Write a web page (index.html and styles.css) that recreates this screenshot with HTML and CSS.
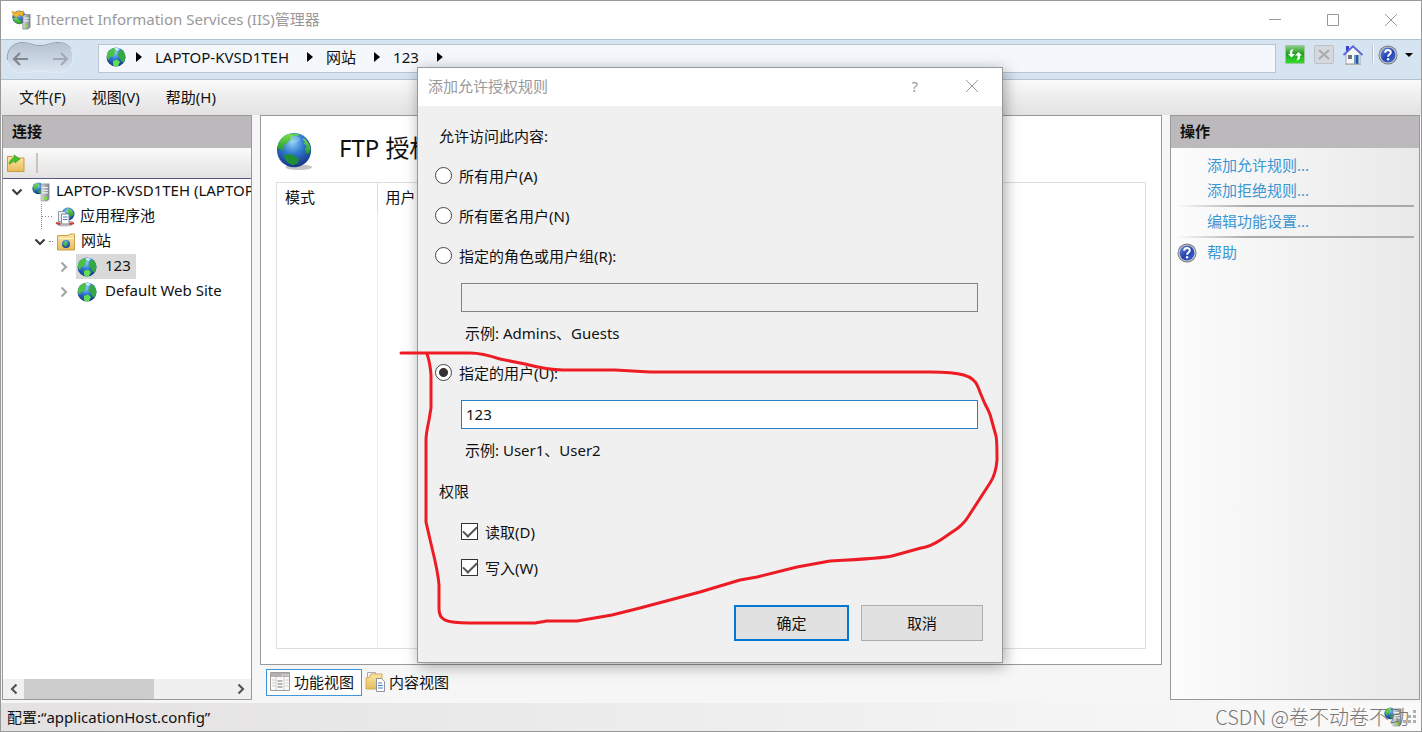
FILE: index.html
```html
<!DOCTYPE html>
<html lang="zh-CN">
<head>
<meta charset="utf-8">
<title>Internet Information Services (IIS)管理器</title>
<link rel="stylesheet" href="styles.css">
</head>
<body>
<svg class="defs" aria-hidden="true">
  <defs>
    <radialGradient id="sea" cx="45%" cy="28%" r="75%">
      <stop offset="0" stop-color="#8fd0f5"/><stop offset=".45" stop-color="#2f78cf"/><stop offset="1" stop-color="#15307f"/>
    </radialGradient>
    <linearGradient id="land" x1="0" y1="0" x2="0" y2="1">
      <stop offset="0" stop-color="#7be04b"/><stop offset="1" stop-color="#1f9433"/>
    </linearGradient>
    <linearGradient id="folder" x1="0" y1="0" x2="0" y2="1">
      <stop offset="0" stop-color="#fbe6a2"/><stop offset="1" stop-color="#e6bd5c"/>
    </linearGradient>
    <linearGradient id="metal" x1="0" y1="0" x2="1" y2="0">
      <stop offset="0" stop-color="#d5dade"/><stop offset="1" stop-color="#7d868d"/>
    </linearGradient>
    <linearGradient id="green" x1="0" y1="0" x2="0" y2="1">
      <stop offset="0" stop-color="#8fce86"/><stop offset=".45" stop-color="#1fa01f"/><stop offset="1" stop-color="#2fe02a"/>
    </linearGradient>
    <linearGradient id="helpfill" x1="0" y1="0" x2="1" y2="1">
      <stop offset="0" stop-color="#6d92e0"/><stop offset=".5" stop-color="#2443ae"/><stop offset="1" stop-color="#3e68d2"/>
    </linearGradient>
    <linearGradient id="blob" x1="0" y1="0" x2="0" y2="1">
      <stop offset="0" stop-color="#b5c1d0"/><stop offset="1" stop-color="#dbe6f2"/>
    </linearGradient>
    <symbol id="globe" viewBox="0 0 20 20">
      <circle cx="10" cy="10" r="9.500" fill="url(#sea)"/>
      <path d="M1 8C2 4 5 1.500 8.500 1L10 3 8.500 5 9 7 6.500 9 4 10 3 13C1.500 12 .8 10 1 8z" fill="#4cc244"/>
      <path d="M12 6l2-3 2-.3C18 4.500 19.500 7 19.400 10.500c-.2 2-1 4-2 5L15 14l-1-3-2.500-2z" fill="#35a843"/>
      <path d="M7 14l4-1.500 3 2.500-2 4c-2 .5-4 .3-5-1z" fill="#5ce04f"/>
      <path d="M8.500 1.200c2-.6 4-.2 5.500.8l-2.500 2-2-.5z" fill="#c9ecfb"/>
    </symbol>
    <symbol id="bigglobe" viewBox="0 0 38 38">
      <circle cx="19" cy="19" r="18" fill="url(#sea)"/>
      <path d="M1.500 17C2 10 7 4 13 2l4-.5 1 2-2 2 2 1-2 2-3 1-2 3-3 1 1 2-2 2 2 3-3-1-2-2z" fill="url(#land)"/>
      <path d="M17 2l5-.6 3 1-3 2-3 0z" fill="#5bcf4a"/>
      <path d="M29 6c4 3 7 8 7.500 12l-2 5-3-1-1-4 2-3-3-3 1-2-2-2z" fill="url(#land)"/>
      <path d="M8 25l5-2 5 1 2 2 4 2-1 5-5 2c-4-1-8-4-10-10z" fill="#1f8f35"/>
      <path d="M15 4c4-1 9 0 11 4-3 3-8 4-12 3z" fill="#d9f4ff" opacity=".25"/>
    </symbol>
    <symbol id="server" viewBox="0 0 20 22">
      <circle cx="7" cy="7" r="6.500" fill="url(#sea)"/>
      <path d="M1 5l4-4 3 1-2 4-3 4zM7 9l4 1-1 3-3-1z" fill="url(#land)"/>
      <path d="M10 3l2-1h7v17l-2 2h-7z" fill="url(#metal)" stroke="#8c9499" stroke-width=".6"/>
      <path d="M11.500 6h6M11.500 9h6M11.500 12h6" stroke="#f4f6f7" stroke-width="1.200"/>
      <circle cx="15" cy="18" r="1.700" fill="#7ee71c"/>
    </symbol>
    <symbol id="help" viewBox="0 0 20 20">
      <circle cx="10" cy="10" r="9.500" fill="#77797e"/>
      <circle cx="10" cy="10" r="8.600" fill="#c8cad0"/>
      <circle cx="10" cy="10" r="7.400" fill="url(#helpfill)"/>
      <path d="M7.200 7.800c0-3.600 5.600-3.500 5.600-.4 0 1.900-2.700 2-2.700 4.400" fill="none" stroke="#fff" stroke-width="2"/>
      <circle cx="10.100" cy="14.300" r="1.200" fill="#fff"/>
    </symbol>
    <symbol id="chevron" viewBox="0 0 12 12">
      <path d="M1.500 3.500L6 8l4.500-4.500" fill="none" stroke="currentColor" stroke-width="2.200"/>
    </symbol>
    <symbol id="close" viewBox="0 0 14 14">
      <path d="M1 1l12 12M13 1L1 13" stroke="currentColor" fill="none"/>
    </symbol>
  </defs>
</svg>

<div class="window">
  <header class="titlebar">
    <svg class="app-icon" viewBox="0 0 22 22">
      <circle cx="9" cy="8" r="7.500" fill="url(#sea)"/>
      <path d="M2 9l4-1 3 3 3 1-2 4-5-2z" fill="url(#land)"/>
      <path d="M1 1l4 2 3-2 4 1 2-1-1 6-4-2-2 3-4-1z" fill="#f2b52e" stroke="#d08a12" stroke-width=".6"/>
      <path d="M13 7l2-2h6v14l-2 2h-6z" fill="url(#metal)" stroke="#6f777d" stroke-width=".7"/>
      <path d="M14.500 9h5M14.500 12h5" stroke="#fff"/>
      <circle cx="17.500" cy="17.500" r="1.500" fill="#7ee71c"/>
    </svg>
    <h1 class="window-title">Internet Information Services (IIS)管理器</h1>
    <div class="window-controls">
      <button class="plain" aria-label="最小化"><svg class="glyph" viewBox="0 0 14 14"><path d="M1 6.500h12" stroke="currentColor"/></svg></button>
      <button class="plain" aria-label="最大化"><svg class="glyph" viewBox="0 0 14 14"><path d="M1.500 1.500h11v11h-11z" fill="none" stroke="currentColor"/></svg></button>
      <button class="plain" aria-label="关闭"><svg class="glyph"><use href="#close"/></svg></button>
    </div>
  </header>

  <nav class="navbar">
    <svg class="history" viewBox="0 0 70 34" role="img" aria-label="后退 前进">
      <path d="M17 1.500c8 0 10 3 18 3s10-3 18-3c9 0 15 6 15 14.500S62 32 53 32c-8 0-10-2-18-2s-10 2-18 2C8 32 2 25 2 16S8 1.500 17 1.500z" fill="url(#blob)" stroke="#e3ecf5"/>
      <path d="M2.500 19C1 9 8 1.500 17 1.500c8 0 10 3 18 3s10-3 18-3c6 0 10 2 13 6" fill="none" stroke="#96a0ad"/>
      <path d="M23 18H9m6-6l-6 6 6 6" fill="none" stroke="#81868d" stroke-width="2.200"/>
      <path d="M48 18h14m-6-6l6 6-6 6" fill="none" stroke="#a1aab5" stroke-width="2.200"/>
    </svg>
    <div class="address">
      <svg class="icon20"><use href="#globe"/></svg>
      <i class="arrow"></i><span>LAPTOP-KVSD1TEH</span>
      <i class="arrow"></i><span>网站</span>
      <i class="arrow"></i><span>123</span>
      <i class="arrow"></i>
    </div>
    <div class="nav-tools">
      <button class="plain" aria-label="刷新"><svg class="icon20" viewBox="0 0 20 20">
        <rect x=".5" y=".5" width="19" height="18" rx="1" fill="url(#green)" stroke="#a6c4a3"/>
        <path d="M8.500 4C5 4.500 4.500 6.500 5 9H3l3.500 3.500L10 9H7.500C7 7 7.500 5.500 8.500 4zM11.500 15.500c3.500-.5 4-2.500 3.500-5h2L13.500 7 10 10.500h2.500c.5 2 0 3.500-1 5z" fill="#fff"/>
      </svg></button>
      <button class="plain" aria-label="停止" disabled><svg class="icon20" viewBox="0 0 20 20">
        <rect x=".5" y=".5" width="19" height="18" rx="1" fill="#d5d8dc" stroke="#bcc1c6"/>
        <path d="M5 5l10 9M15 5L5 14" stroke="#a9adb1" stroke-width="2.200"/>
      </svg></button>
      <button class="plain" aria-label="主页"><svg class="icon20" viewBox="0 0 20 20">
        <path d="M3 8l7-6 7 6v11H3z" fill="#f6f6f3" stroke="#9a9da8" stroke-width=".8"/>
        <path d="M3 1h3v5H3z" fill="#3540cf"/>
        <path d="M.5 10L10 1.300 19.500 10" fill="none" stroke="#5c68d8" stroke-width="1.900"/>
        <path d="M11 10h4.500v9H11z" fill="#24599e"/><path d="M11 10h2v9h-2z" fill="#7499c4"/>
        <path d="M5 10h4v4H5z" fill="#6b7180"/>
        <path d="M2 19.200h16" stroke="#a9a9a4"/>
      </svg></button>
      <i class="tool-sep"></i>
      <button class="plain help-menu" aria-label="帮助"><svg class="icon20"><use href="#help"/></svg><i class="caret"></i></button>
    </div>
  </nav>

  <div class="menubar">
    <button class="plain">文件(F)</button>
    <button class="plain">视图(V)</button>
    <button class="plain">帮助(H)</button>
  </div>

  <main class="workspace">
    <section class="panel">
      <h2 class="panel-head">连接</h2>
      <div class="panel-tools">
        <button class="plain" aria-label="连接"><svg class="icon20" viewBox="0 0 20 20">
          <path d="M1.500 3.500h5l2 1.500h9.500v13.500H1.500z" fill="url(#folder)" stroke="#c79b45"/>
          <path d="M3 11c1-2 1-5 5-6V2l6 4-5 4V8C6 8 6 11 3 11z" fill="#45c32b" stroke="#2c9220" stroke-width=".6"/>
        </svg></button>
        <i class="grip"></i>
      </div>
      <ul class="tree">
        <li class="node">
          <svg class="twisty"><use href="#chevron"/></svg><i class="dots"></i>
          <svg class="icon20"><use href="#server"/></svg><span class="node-label">LAPTOP-KVSD1TEH (LAPTOP-KVSD1TEH\Admin)</span>
        </li>
        <li class="node level-pool">
          <i class="dots dots-long"></i>
          <svg class="icon20" viewBox="0 0 20 20">
            <circle cx="13" cy="7" r="6.500" fill="url(#sea)"/><path d="M12 1l5 2 2 5-4 2-2-4z" fill="url(#land)"/>
            <path d="M1 16c0-3 17-3 18 0s-17 5-18 0z" fill="#d3d6da" stroke="#8c9298" stroke-width=".6"/>
            <path d="M1 16l4 2v-2zM19 16l-4 2v-2z" fill="#d03a2b" stroke="#d03a2b"/>
            <path d="M3.500 4.500h7v10h-7z" fill="#eef1f5" stroke="#929aa5"/><path d="M6.500 7h7.500v10H6.500z" fill="#fff" stroke="#7e8792"/>
            <path d="M8 10h4.500M8 12.500h4.500" stroke="#4d7fc0"/>
          </svg><span class="node-label">应用程序池</span>
        </li>
        <li class="node level-1">
          <svg class="twisty"><use href="#chevron"/></svg><i class="dots"></i>
          <svg class="icon20" viewBox="0 0 20 20">
            <path d="M1.500 3.500H12l2-1.500h4.500v16h-17z" fill="url(#folder)" stroke="#c9a04a"/>
            <path d="M2 6.500h16" stroke="#fff3cc"/>
            <circle cx="10" cy="12" r="4" fill="url(#sea)"/><path d="M7 12l2-3 2 2-1 4z" fill="#46c03c"/>
          </svg><span class="node-label">网站</span>
        </li>
        <li class="node level-2">
          <svg class="twisty closed"><use href="#chevron"/></svg>
          <div class="node-body selected"><svg class="icon20"><use href="#globe"/></svg><span class="node-label">123</span></div>
        </li>
        <li class="node level-2">
          <svg class="twisty closed"><use href="#chevron"/></svg>
          <div class="node-body"><svg class="icon20"><use href="#globe"/></svg><span class="node-label">Default Web Site</span></div>
        </li>
      </ul>
      <div class="hscroll">
        <button class="plain scroll-end" aria-label="向左滚动"><svg class="turn-left"><use href="#chevron"/></svg></button>
        <div class="track"><div class="thumb"></div></div>
        <button class="plain scroll-end" aria-label="向右滚动"><svg class="turn-right"><use href="#chevron"/></svg></button>
      </div>
    </section>

    <section class="center">
      <div class="feature">
        <div class="feature-head">
          <svg class="icon40" viewBox="0 0 40 42"><ellipse cx="24" cy="37" rx="14" ry="3" fill="#c4c4c4"/><use href="#bigglobe" width="38" height="38"/></svg>
          <h2 class="feature-title">FTP 授权规则</h2>
        </div>
        <div class="rules">
          <table class="rules-table">
            <thead><tr><th class="col-mode">模式</th><th>用户</th></tr></thead>
            <tbody><tr><td></td><td></td></tr></tbody>
          </table>
        </div>
      </div>
      <div class="views">
        <button class="view current"><svg class="icon20" viewBox="0 0 20 20">
          <path d="M.5.500h19v18H.5z" fill="#fafafa" stroke="#a09c9c"/><path d="M1 1h18v4H1z" fill="#b3b0b3"/>
          <path d="M12 3h1.500M15 3h1.500M17.500 3H19" stroke="#fff"/>
          <path d="M2 8h3M2 11h3M2 14h3M15.500 8h3M15.500 11h3M15.500 14h3" stroke="#cbc8c3"/>
          <path d="M6 5v13M14 5v13" stroke="#ccc"/><path d="M7.500 9h5M7.500 12h5M7.500 15h5" stroke="#7a776f" stroke-width="1.200"/>
        </svg>功能视图</button>
        <button class="view"><svg class="icon20" viewBox="0 0 20 20">
          <path d="M2.500.500h8v4l-8 12z" fill="#f3f3f3" stroke="#aaa"/>
          <path d="M1 6l4-1 1-3h11v15H1z" fill="url(#folder)" stroke="#c9a04a" stroke-width=".8"/>
          <path d="M11.500 6.500h5l3 3v10h-8z" fill="#fff" stroke="#8d949c"/><path d="M13 11h4M13 13.500h5M13 16h5" stroke="#3f80cd"/>
        </svg>内容视图</button>
      </div>
    </section>

    <aside class="panel actions">
      <h2 class="panel-head">操作</h2>
      <div class="action-list">
        <a class="action" href="#allow">添加允许规则...</a>
        <a class="action" href="#deny">添加拒绝规则...</a>
        <hr class="rule">
        <a class="action" href="#edit">编辑功能设置...</a>
        <hr class="rule">
        <a class="action with-icon" href="#help-page"><svg class="icon20"><use href="#help"/></svg>帮助</a>
      </div>
    </aside>
  </main>

  <footer class="statusbar">
    <span>配置:“applicationHost.config”</span>
    <div class="status-right">
      <svg class="icon20"><use href="#server"/></svg>
      <svg class="resize" viewBox="0 0 14 14"><path d="M10 0h3v3h-3zM5 5h3v3H5zM10 5h3v3h-3zM0 10h3v3H0zM5 10h3v3H5zM10 10h3v3h-3z" fill="#b0aeb0"/></svg>
      <span class="watermark">CSDN @卷不动卷不动</span>
    </div>
  </footer>

  <div class="overlay">
    <form class="dialog" role="dialog" aria-labelledby="dialog-title">
      <div class="dialog-bar">
        <h2 class="dialog-title" id="dialog-title">添加允许授权规则</h2>
        <button type="button" class="plain dialog-help" aria-label="帮助">?</button>
        <button type="button" class="plain" aria-label="关闭"><svg class="glyph"><use href="#close"/></svg></button>
      </div>
      <div class="dialog-body">
        <p class="line">允许访问此内容:</p>
        <label class="choice"><input type="radio" name="who">所有用户(A)</label>
        <label class="choice"><input type="radio" name="who">所有匿名用户(N)</label>
        <label class="choice"><input type="radio" name="who">指定的角色或用户组(R):</label>
        <input class="field" type="text" aria-label="指定的角色或用户组" disabled>
        <p class="hint">示例: Admins、Guests</p>
        <label class="choice"><input type="radio" name="who" checked>指定的用户(U):</label>
        <input class="field active" type="text" aria-label="指定的用户" value="123">
        <p class="hint">示例: User1、User2</p>
        <p class="line section">权限</p>
        <div class="permissions">
          <label class="tick"><input type="checkbox" checked>读取(D)</label>
          <label class="tick"><input type="checkbox" checked>写入(W)</label>
        </div>
        <div class="buttons">
          <button type="button" class="btn primary">确定</button>
          <button type="button" class="btn">取消</button>
        </div>
      </div>
      <svg class="marker" viewBox="417 67 586 596" aria-hidden="true">
        <path d="M401 353H470Q482 353 500 359L525 364Q548 370 563 370H615L650 372H930C960 372 974 375 978 387Q981 395 985 404Q990 413 991 418L996 436Q997 440 997 460Q996 474 990 483L968 517Q965 522 958 528L942 539Q930 547 921 548L892 556Q886 558 830 561L797 567L757 577L740 580L700 592L640 608L612 615L577 621H547L535 623H470C445 623 439 620 439 609V585Q438 572 432 548L426 522V440Q426 434 429 420L431 408V375Q430 362 427 354"/>
      </svg>
    </form>
  </div>
</div>
</body>
</html>
```

FILE: styles.css
```css
* { box-sizing: border-box; }

body {
  margin: 0;
  color: #111;
  font: 15px/20px "Noto Sans", "Noto Sans CJK SC", sans-serif;
}

h1, h2, p, ul { margin: 0; padding: 0; font-weight: 400; }
svg { display: block; flex: none; overflow: visible; }
.defs { position: absolute; width: 0; height: 0; }

.plain {
  padding: 0;
  border: 0;
  background: none;
  color: inherit;
  font: inherit;
}

.icon20 { width: 20px; height: 20px; }
.icon40 { width: 38px; height: 40px; }
.glyph { width: 14px; height: 14px; }

.window {
  position: relative;
  display: flex;
  flex-direction: column;
  min-height: 100vh;
  border: 1px solid #999;
  background: #f6f6f6;
}

/* Title bar */
.titlebar {
  display: flex;
  align-items: center;
  height: 38px;
  padding: 0 23px 0 10px;
  background: #fff;
  color: #999;
}
.app-icon { width: 20px; height: 22px; }
.window-title { flex: 1; margin-left: 5px; padding-bottom: 2px; font-size: 15px; line-height: 20px; }
.window-controls { display: flex; gap: 44px; }

/* Navigation */
.navbar {
  display: flex;
  height: 41px;
  padding: 4px 8px 0 4px;
  border-top: 1px solid #b3c2d0;
  border-bottom: 1px solid #b3c2d0;
  background: #d6e3f0;
}
.history { width: 70px; height: 34px; margin-top: -3px; }
.address {
  display: flex;
  flex: 1;
  align-items: center;
  gap: 12px;
  height: 29px;
  margin-left: 23px;
  padding: 0 7px 3px;
  border: 1px solid #b8c5d1;
  background: #f4f8fc;
}
.arrow {
  width: 6px;
  height: 10px;
  background: #000;
  clip-path: polygon(0 0, 100% 50%, 0 100%);
}
.address span + .arrow { margin-left: 6px; }
.address .arrow + span { padding-left: 1px; }
.address .icon20 { margin-right: -2px; }
.nav-tools { display: flex; align-items: flex-start; gap: 9px; margin-left: 9px; padding-top: 1px; }
.tool-sep { width: 2px; height: 18px; border-left: 1px solid #b9c2cc; background: #fff; }
.help-menu { display: flex; align-items: center; gap: 7px; margin-left: -5px; }
.caret { width: 8px; height: 4px; background: #000; clip-path: polygon(0 0, 100% 0, 50% 100%); }

.menubar {
  display: flex;
  gap: 26px;
  height: 35px;
  padding: 0 18px 2px;
  background: linear-gradient(#fafafa, #e3e1e2);
}

/* Three column workspace */
.workspace {
  display: grid;
  flex: 1;
  grid-template-columns: 250px minmax(0, 1fr) 250px;
  gap: 8px;
  padding: 0 1px 3px;
}
.panel {
  display: flex;
  flex-direction: column;
  min-width: 0;
  border: 1px solid #999;
  background: #fff;
}
.panel-head {
  height: 32px;
  padding: 0 9px;
  background: #bbb9bc;
  font-size: 15px;
  font-weight: 700;
  line-height: 31px;
}
.panel-tools {
  display: flex;
  align-items: center;
  gap: 10px;
  height: 31px;
  padding: 0 3px;
  border-bottom: 1px solid #565888;
  background: linear-gradient(#fbfbfb, #e3e1e2);
}
.grip { width: 2px; height: 20px; background: #c9c5b8; }

.tree { flex: 1; overflow: hidden; list-style: none; }
.node { display: flex; align-items: center; height: 25px; padding-left: 8px; white-space: nowrap; }
.level-pool { padding-left: 38px; }
.level-1 { padding-left: 31px; }
.level-2 { padding-left: 55px; }
.twisty { width: 12px; height: 12px; color: #3d3d3d; }
.closed { color: #a6a6a6; transform: rotate(-90deg); }
.dots { width: 4px; margin: 0 4px; border-top: 1px dotted #888; }
.level-1 .dots { margin: 0 3px; }
.level-pool .dots { width: 12px; margin: 0 2px 0 0; }
.level-pool .dots-long { height: 25px; border-left: 1px dotted #888; border-top: 0; background: repeating-linear-gradient(90deg, #888 0 1px, transparent 1px 3px) 0 12px / 100% 1px no-repeat; }
.node-label { margin-left: 5px; padding-bottom: 3px; }
.node-body { display: flex; align-items: center; height: 25px; margin-left: 6px; padding: 0 5px 0 1px; }
.node-body .node-label { margin-left: 8px; }
.selected { background: #d9d9d9; }

.hscroll { display: flex; height: 20px; background: #f0f0f0; }
.scroll-end { display: grid; width: 21px; place-items: center; color: #555; }
.scroll-end svg { width: 12px; height: 12px; }
.turn-left { transform: rotate(90deg); }
.turn-right { transform: rotate(-90deg); }
.track { flex: 1; }
.thumb { width: 63%; height: 100%; background: #cdcdcd; }

.center { display: flex; flex-direction: column; min-width: 0; }
.feature {
  display: flex;
  flex: 1;
  flex-direction: column;
  padding: 16px 15px 15px;
  border: 1px solid #999;
  background: #fff;
}
.feature-head { display: flex; gap: 25px; height: 50px; }
.feature-title { font-size: 24px; line-height: 32px; }
.rules { display: flex; flex: 1; border: 1px solid #dedede; }
.rules-table { width: 100%; border-collapse: collapse; }
.rules-table th { height: 30px; padding: 0 8px 3px; font-weight: 400; text-align: left; }
.rules-table .col-mode { width: 100px; }
.rules-table th + th { border-left: 1px solid #dedede; }
.rules-table td { padding: 0; }
.rules-table td + td { border-left: 1px solid #e6f0fa; }

.views { display: flex; height: 35px; padding: 4px 6px; }
.view {
  display: flex;
  align-items: center;
  gap: 4px;
  height: 27px;
  padding: 0 7px 1px 3px;
  border: 1px solid transparent;
  background: none;
  color: inherit;
  font: inherit;
}
.view + .view { padding-left: 2px; }
.view.current { border-color: #3f94dc; background: #fff; }

.actions { background: linear-gradient(90deg, #fcfcfc, #e9e9e9); }
.action-list { padding: 5px; }
.action { display: block; padding-left: 31px; color: #3a97d4; line-height: 25px; text-decoration: none; }
.with-icon { display: flex; align-items: center; gap: 10px; padding-left: 1px; }
.rule { height: 2px; margin: 2px 0; border: 0; background: linear-gradient(90deg, transparent, #aaa 30%, #aaa); }

.statusbar {
  display: flex;
  align-items: center;
  justify-content: space-between;
  height: 28px;
  padding: 0 4px 0 6px;
  background: linear-gradient(90deg, #e3e1e2, #fafafa);
}
.status-right { position: relative; display: flex; align-items: center; }
.resize { width: 14px; height: 14px; }
.watermark {
  position: absolute;
  right: 8px;
  bottom: 0;
  color: #777;
  font: 300 20px/20px "Noto Sans CJK SC", sans-serif;
  white-space: nowrap;
}

/* Dialog */
.overlay {
  position: absolute;
  inset: 0 2px 3px 0;
  display: grid;
  place-items: center;
}
.dialog {
  position: relative;
  width: 586px;
  border: 1px solid #999;
  background: #f0f0f0;
  box-shadow: 2px 3px 14px rgba(0, 0, 0, .35);
}
.dialog-bar {
  display: flex;
  align-items: center;
  height: 38px;
  padding: 0 23px 2px 10px;
  background: #fff;
  color: #999;
}
.dialog-title { flex: 1; font-size: 15px; line-height: 20px; }
.dialog-help { margin-right: 47px; }
.dialog-body { display: flex; flex-direction: column; padding: 20px 19px 21px 17px; }
.line { padding-left: 4px; }
.choice { display: flex; align-items: center; gap: 7px; margin-top: 20px; }
.choice input {
  appearance: none;
  width: 17px;
  height: 17px;
  margin: 0;
  border: 1px solid #444;
  border-radius: 50%;
  background: #fff;
}
.choice input:checked { background: radial-gradient(circle, #333 0 4px, #fff 5px); }
.field {
  height: 29px;
  margin: 17px 5px 0 26px;
  padding: 0 4px;
  border: 1px solid #828282;
  background: #efefef;
  color: #111;
  font: inherit;
}
.field.active { border: 1px solid #2a7fc9; background: #fff; outline: 0; }
.hint { margin-top: 11px; padding-left: 30px; }
.section { margin-top: 21px; }
.permissions { display: flex; flex-direction: column; gap: 16px; margin-top: 21px; padding-left: 26px; }
.tick { display: flex; align-items: center; gap: 7px; }
.tick input {
  display: grid;
  appearance: none;
  width: 17px;
  height: 17px;
  margin: 0;
  border: 1px solid #333;
  background: #fff;
  place-items: center;
}
.tick input:checked::after {
  width: 12px;
  height: 6px;
  border: solid #555;
  border-width: 0 0 2px 2px;
  content: "";
  transform: translateY(-2px) rotate(-45deg);
}
.buttons { display: flex; justify-content: flex-end; gap: 12px; margin-top: 27px; }
.btn { width: 122px; height: 36px; border: 1px solid #adadad; background: #e1e1e1; color: inherit; font: inherit; }
.btn.primary { width: 115px; border: 2px solid #0078d7; }
.marker {
  position: absolute;
  inset: -1px;
  width: calc(100% + 2px);
  height: calc(100% + 2px);
  pointer-events: none;
}
.marker path { fill: none; stroke: #ed1c24; stroke-width: 3; stroke-linecap: round; stroke-linejoin: round; }
```
